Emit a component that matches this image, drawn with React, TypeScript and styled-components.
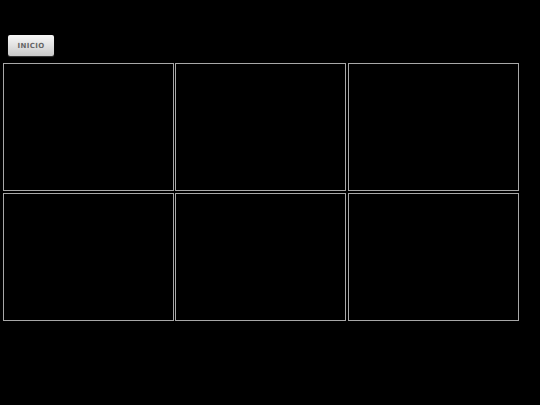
import React from 'react'
import styled, { createGlobalStyle } from 'styled-components'

const GlobalStyle = createGlobalStyle`
    html, body {
        margin: 0;
        padding: 0;
        background: #000;
        height: 100%;
    }
    body {
        font-family: "Liberation Sans", Arial, sans-serif;
    }
`;

const panels = [1, 2, 3, 4, 5, 6];

function App() {
    return (
        <Page>
            <GlobalStyle />
            <Toolbar>
                <HomeButton>INICIO</HomeButton>
            </Toolbar>
            <PanelGrid>
                {panels.map((id) => (
                    <Panel key={id} />
                ))}
            </PanelGrid>
        </Page>
    );
}

const Page = styled.div`
    width: 540px;
    height: 405px;
    background: #000;
    overflow: hidden;
`;

const Toolbar = styled.div`
    display: flex;
    align-items: flex-start;
    padding: 35px 0 7px 8px;
`;

const HomeButton = styled.button`
    width: 46px;
    height: 21px;
    margin: 0;
    padding: 0;
    border: none;
    border-radius: 2px;
    background: linear-gradient(to bottom, #f7f7f7 0%, #e2e2e2 50%, #c9c9c9 100%);
    box-shadow: 0 1px 1px rgba(110, 110, 110, 0.5);
    color: #666;
    font-family: "DejaVu Sans", "Liberation Sans", sans-serif;
    font-size: 7px;
    font-weight: bold;
    letter-spacing: 0.4px;
    display: flex;
    align-items: center;
    justify-content: center;
    cursor: pointer;
`;

const PanelGrid = styled.div`
    display: grid;
    grid-template-columns: 172px 173px 171px;
    grid-template-rows: 130px 128px;
    padding-left: 3px;
`;

const Panel = styled.div`
    width: 171px;
    height: 128px;
    box-sizing: border-box;
    border: 1px solid #a8a8a8;
    background: #000;
`;

export default App;
